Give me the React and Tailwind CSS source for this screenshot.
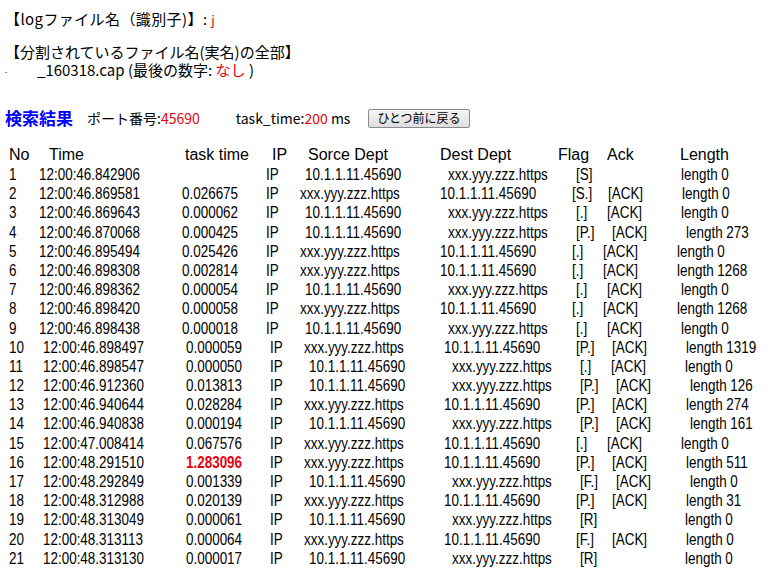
const rows = [
  [1,'12:00:46.842906','',true,'[S]',false,'0'],
  [2,'12:00:46.869581','0.026675',false,'[S.]',true,'0'],
  [3,'12:00:46.869643','0.000062',true,'[.]',true,'0'],
  [4,'12:00:46.870068','0.000425',true,'[P.]',true,'273'],
  [5,'12:00:46.895494','0.025426',false,'[.]',true,'0'],
  [6,'12:00:46.898308','0.002814',false,'[.]',true,'1268'],
  [7,'12:00:46.898362','0.000054',true,'[.]',true,'0'],
  [8,'12:00:46.898420','0.000058',false,'[.]',true,'1268'],
  [9,'12:00:46.898438','0.000018',true,'[.]',true,'0'],
  [10,'12:00:46.898497','0.000059',false,'[P.]',true,'1319'],
  [11,'12:00:46.898547','0.000050',true,'[.]',true,'0'],
  [12,'12:00:46.912360','0.013813',true,'[P.]',true,'126'],
  [13,'12:00:46.940644','0.028284',false,'[P.]',true,'274'],
  [14,'12:00:46.940838','0.000194',true,'[P.]',true,'161'],
  [15,'12:00:47.008414','0.067576',false,'[.]',true,'0'],
  [16,'12:00:48.291510','1.283096',false,'[P.]',true,'511'],
  [17,'12:00:48.292849','0.001339',true,'[F.]',true,'0'],
  [18,'12:00:48.312988','0.020139',false,'[P.]',true,'31'],
  [19,'12:00:48.313049','0.000061',true,'[R]',false,'0'],
  [20,'12:00:48.313113','0.000064',false,'[F.]',true,'0'],
  [21,'12:00:48.313130','0.000017',true,'[R]',false,'0'],
];

const N = ({ children, className = '' }) => (
  <span className={'inline-block origin-left scale-x-[0.84] whitespace-pre ' + className}>{children}</span>
);

export default function App() {
  const jp = { fontFamily: '"Noto Sans CJK JP", "Liberation Sans", sans-serif' };
  return (
    <div className="w-[770px] h-[568px] bg-white text-black overflow-hidden" style={{ fontFamily: '"Liberation Sans", Arial, sans-serif' }}>
      <div className="pl-[5px] pt-[10px] text-[15px] leading-[18px]" style={jp}>
        <div className="tracking-[0.4px]">【logファイル名（識別子)】: <span className="text-red-600 text-[13px]">j</span></div>
        <div className="mt-[14px]">【分割されているファイル名(実名)の全部】</div>
        <div className="flex items-end"><span className="w-[32px] text-[8px]">.</span>_160318.cap (最後の数字: <span className="text-red-600">&nbsp;なし</span>&nbsp;)</div>
      </div>
      <div className="flex items-center pl-[5px] mt-[28px] h-[22px] text-[14px]" style={jp}>
        <span className="text-[#0000ff] text-[17px] font-bold">検索結果</span>
        <span className="ml-[14px]">ポート番号:<span className="text-red-600">45690</span></span>
        <span className="ml-[36px]">task_time:<span className="text-red-600">200</span> ms</span>
        <button className="ml-[18px] h-[19px] px-[8px] text-[12px] leading-[16px] border border-[#8a8a8a] rounded-[2px] bg-gradient-to-b from-[#f6f6f6] to-[#dddddd]">ひとつ前に戻る</button>
      </div>
      <div className="mt-[16px] flex text-[16px] leading-[19px] h-[19px]">
        <span className="w-[49px] pl-[9px]">No</span>
        <span className="w-[136px]">Time</span>
        <span className="w-[87px]">task time</span>
        <span className="w-[36px]">IP</span>
        <span className="w-[132px]">Sorce Dept</span>
        <span className="w-[118px]">Dest Dept</span>
        <span className="w-[49px]">Flag</span>
        <span className="w-[73px]">Ack</span>
        <span>Length</span>
      </div>
      <div className="text-[16px] leading-[19.2px] mt-[1px]">
        {rows.map(([no, t, task, ipSrc, flag, ack, len]) => {
          const two = no >= 10;
          const narrowFlag = flag === '[.]' || flag === '[R]' || flag === '[S]';
          return (
            <div key={no} className="flex h-[19.2px] pl-[9px] whitespace-nowrap">
              <span className={two ? 'w-[34px]' : 'w-[30px]'}><N>{no}</N></span>
              <span className="w-[143px]"><N>{t}</N></span>
              <span className="w-[84px]"><N className={no === 16 ? 'text-red-600 font-bold' : ''}>{task}</N></span>
              <span className={ipSrc ? 'w-[39px]' : 'w-[34px]'}><N>IP</N></span>
              <span className={ipSrc ? 'w-[143px]' : 'w-[140px]'}><N>{ipSrc ? '10.1.1.11.45690' : 'xxx.yyy.zzz.https'}</N></span>
              <span className={ipSrc ? 'w-[128px]' : 'w-[132px]'}><N>{ipSrc ? 'xxx.yyy.zzz.https' : '10.1.1.11.45690'}</N></span>
              <span className={narrowFlag ? 'w-[31px]' : 'w-[36px]'}><N>{flag}</N></span>
              <span className="w-[74px]"><N>{ack ? '[ACK]' : ''}</N></span>
              <span><N>{'length ' + len}</N></span>
            </div>
          );
        })}
      </div>
    </div>
  );
}
